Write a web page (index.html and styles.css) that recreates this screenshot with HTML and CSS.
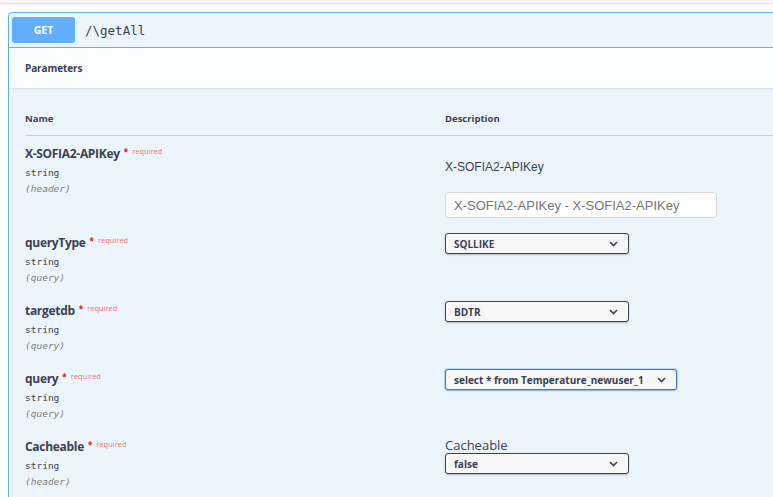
FILE: index.html
```html
<!DOCTYPE html>
<html>
<head>
<meta charset="utf-8">
<link rel="stylesheet" href="styles.css">
</head>
<body>
<div class="topbar"></div>
<div class="opblock">
  <div class="summary">
    <span class="method">GET</span>
    <span class="path">/\getAll</span>
  </div>
  <div class="section-header"><h4>Parameters</h4></div>
  <div class="params">
    <div class="thead">
      <div class="col-name">Name</div>
      <div class="col-desc">Description</div>
    </div>

    <div class="row">
      <div class="col-name">
        <div class="pname">X-SOFIA2-APIKey<span class="star">*</span><span class="req">required</span></div>
        <div class="ptype">string</div>
        <div class="pin">(header)</div>
      </div>
      <div class="col-desc">
        <div class="desc-text">X-SOFIA2-APIKey</div>
        <input class="text-input" type="text" placeholder="X-SOFIA2-APIKey - X-SOFIA2-APIKey">
      </div>
    </div>

    <div class="row">
      <div class="col-name">
        <div class="pname">queryType<span class="star">*</span><span class="req">required</span></div>
        <div class="ptype">string</div>
        <div class="pin">(query)</div>
      </div>
      <div class="col-desc">
        <div class="select-wrap">
          <select class="sel sel-short"><option>SQLLIKE</option></select>
          <svg class="chev" width="9" height="6" viewBox="0 0 9 6"><path d="M1 1 L4.5 4.5 L8 1" fill="none" stroke="#3b4151" stroke-width="1.6"/></svg>
        </div>
      </div>
    </div>

    <div class="row">
      <div class="col-name">
        <div class="pname">targetdb<span class="star">*</span><span class="req">required</span></div>
        <div class="ptype">string</div>
        <div class="pin">(query)</div>
      </div>
      <div class="col-desc">
        <div class="select-wrap">
          <select class="sel sel-short"><option>BDTR</option></select>
          <svg class="chev" width="9" height="6" viewBox="0 0 9 6"><path d="M1 1 L4.5 4.5 L8 1" fill="none" stroke="#3b4151" stroke-width="1.6"/></svg>
        </div>
      </div>
    </div>

    <div class="row">
      <div class="col-name">
        <div class="pname">query<span class="star">*</span><span class="req">required</span></div>
        <div class="ptype">string</div>
        <div class="pin">(query)</div>
      </div>
      <div class="col-desc">
        <div class="select-wrap">
          <select class="sel sel-long sel-focus"><option>select * from Temperature_newuser_1</option></select>
          <svg class="chev" width="9" height="6" viewBox="0 0 9 6"><path d="M1 1 L4.5 4.5 L8 1" fill="none" stroke="#3b4151" stroke-width="1.6"/></svg>
        </div>
      </div>
    </div>

    <div class="row">
      <div class="col-name">
        <div class="pname">Cacheable<span class="star">*</span><span class="req">required</span></div>
        <div class="ptype">string</div>
        <div class="pin">(header)</div>
      </div>
      <div class="col-desc">
        <div class="label">Cacheable</div>
        <div class="select-wrap">
          <select class="sel sel-short"><option>false</option></select>
          <svg class="chev" width="9" height="6" viewBox="0 0 9 6"><path d="M1 1 L4.5 4.5 L8 1" fill="none" stroke="#3b4151" stroke-width="1.6"/></svg>
        </div>
      </div>
    </div>
  </div>
</div>
</body>
</html>
```

FILE: styles.css
```css
html, body {
  margin: 0;
  padding: 0;
  background: #ffffff;
  overflow: hidden;
  font-family: "Open Sans", "Liberation Sans", sans-serif;
  color: #3b4151;
}

.topbar {
  height: 3px;
  background: #f7f7f7;
  box-shadow: 0 1px 2px rgba(0, 0, 0, 0.15);
}

.opblock {
  margin: 9px 0 0 8px;
  width: 800px;
  height: 600px;
  border: 1px solid #61affe;
  border-radius: 4px;
  background: #ecf4fc;
}

.summary {
  display: flex;
  align-items: center;
  gap: 10px;
  padding: 4px 3px;
  border-bottom: 1px solid #61affe;
}

.method {
  width: 63px;
  height: 26px;
  border-radius: 3px;
  background: #61affe;
  color: #ffffff;
  font-weight: 700;
  font-size: 10.5px;
  display: flex;
  align-items: center;
  justify-content: center;
}

.path {
  font-family: "DejaVu Sans Mono", monospace;
  font-size: 12.5px;
  color: #3b4151;
}

.section-header {
  height: 40px;
  display: flex;
  align-items: center;
  padding: 0 16px;
  background: #fbfdff;
  box-shadow: 0 1px 2px rgba(0, 0, 0, 0.1);
}

.section-header h4 {
  margin: 0;
  font-size: 10px;
  font-weight: 700;
  letter-spacing: -0.1px;
}

.params {
  padding: 22px 16px 0;
}

.thead {
  display: grid;
  grid-template-columns: 420px 1fr;
  font-size: 9.5px;
  font-weight: 700;
  line-height: 18px;
  padding-bottom: 7px;
  border-bottom: 1px solid rgba(59, 65, 81, 0.2);
}

.row {
  display: grid;
  grid-template-columns: 420px 1fr;
  padding: 9px 0 7px;
  align-items: start;
}

.pname {
  font-size: 12px;
  font-weight: 700;
  letter-spacing: -0.3px;
  line-height: 18px;
  height: 18px;
  margin-bottom: 2px;
}

.star {
  color: #ff0000;
  font-size: 8px;
  line-height: 1;
  position: relative;
  top: -3px;
  margin-left: 4px;
  letter-spacing: 0;
}

.req {
  color: rgba(255, 0, 0, 0.6);
  font-size: 7.5px;
  line-height: 1;
  font-weight: 400;
  letter-spacing: 0;
  position: relative;
  top: -4px;
  padding-left: 4px;
}

.ptype {
  font-family: "DejaVu Sans Mono", monospace;
  font-size: 9.5px;
  line-height: 16px;
  height: 16px;
}

.pin {
  font-family: "DejaVu Sans Mono", monospace;
  font-size: 9.5px;
  font-style: italic;
  line-height: 16px;
  height: 16px;
  color: #808080;
}

.desc-text {
  font-family: "Liberation Sans", Arial, sans-serif;
  font-size: 12px;
  line-height: 18px;
  margin-top: 13px;
}

.text-input {
  display: block;
  box-sizing: border-box;
  margin: 16px 0 0;
  width: 272px;
  height: 26px;
  border: 1px solid #d9d9d9;
  border-radius: 4px;
  background: #ffffff;
  padding: 0 8px;
  font-family: "Liberation Sans", Arial, sans-serif;
  font-size: 13px;
  color: #3b4151;
}

.text-input::placeholder {
  color: #757575;
}

.label {
  font-size: 13px;
  line-height: 16px;
  height: 16px;
  margin-top: -1px;
  margin-bottom: 1px;
}

.select-wrap {
  position: relative;
  display: block;
  width: max-content;
  height: 21px;
  margin-top: -1px;
}

.sel {
  appearance: none;
  -webkit-appearance: none;
  box-sizing: border-box;
  height: 21px;
  border: 1px solid #41444e;
  border-radius: 3px;
  background: #f7f7f7;
  box-shadow: 0 1px 2px rgba(0, 0, 0, 0.25);
  padding: 0 24px 0 8px;
  font-family: "Open Sans", sans-serif;
  font-size: 10px;
  font-weight: 700;
  color: #3b4151;
  display: block;
  margin: 0;
}

.sel-short {
  width: 184px;
}

.sel-long {
  width: 232px;
}

.sel-focus {
  border-color: #4a6fc0;
  box-shadow: 0 0 0 1px rgba(97, 175, 254, 0.35), 0 1px 2px rgba(0, 0, 0, 0.25);
}

.chev {
  position: absolute;
  right: 11px;
  top: 8px;
  pointer-events: none;
}
```
